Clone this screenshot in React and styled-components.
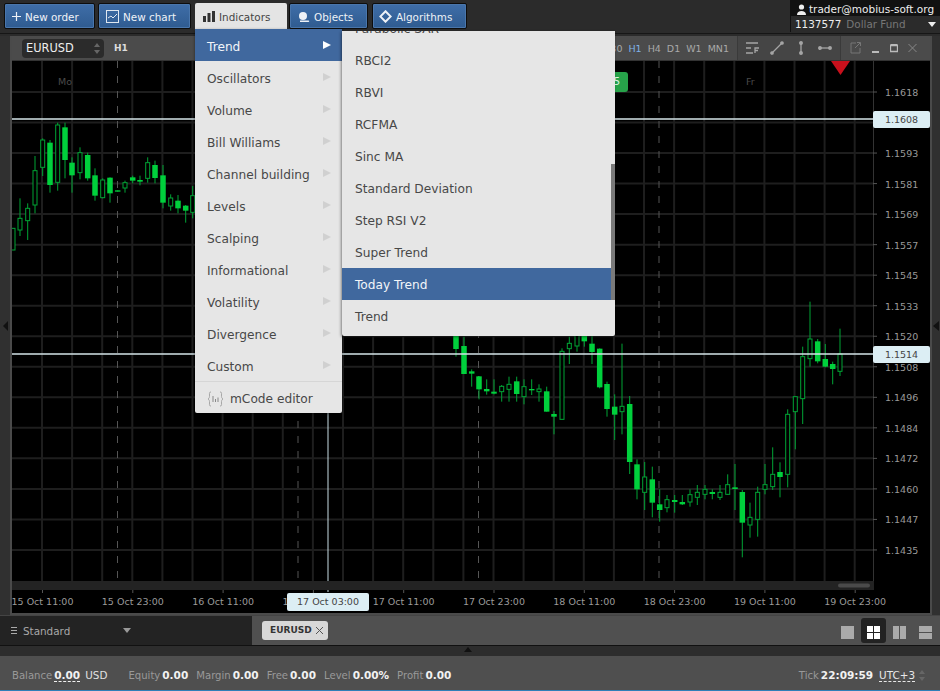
import React from 'react';
import styled, { createGlobalStyle } from 'styled-components';

const Global = createGlobalStyle`
    html, body { margin: 0; padding: 0; background: #2b2b2b; overflow: hidden; }
    * { box-sizing: border-box; }
`;

const FONT = `"DejaVu Sans", Verdana, sans-serif`;

const Page = styled.div`
    width: 940px;
    height: 691px;
    display: flex;
    flex-direction: column;
    font-family: ${FONT};
    background: #2b2b2b;
    border-bottom: 1px solid #2f7fb8;
`, TopBar = styled.div`
    height: 34px;
    flex: none;
    display: flex;
    align-items: flex-start;
    padding: 3px 0 0 4px;
    background: #2b2b2b;
    border-bottom: 1px solid #161616;
`, NavBtn = styled.div`
    height: 26px;
    width: ${p => p.$w}px;
    margin-right: ${p => p.$gap}px;
    display: flex;
    align-items: center;
    gap: 4px;
    padding: 1px 0 0 ${p => p.$pad || 7}px;
    font-size: 10.4px;
    color: #eef2f7;
    background: linear-gradient(#3f6ea8, #2f5b90);
    border: 1px solid #0d0d0d;
    border-radius: 2px;
    box-shadow: inset 0 0 0 1px #4a76ab;
    svg { flex: none; }
`, IndicatorsWrap = styled.div`
    position: relative;
    width: 92px;
    height: 27px;
    margin-right: 2px;
`, IndicatorsBtn = styled.div`
    height: 27px;
    display: flex;
    align-items: center;
    gap: 4px;
    padding-left: 8px;
    font-size: 10.4px;
    color: #444;
    background: #e4e4e4;
    border-radius: 2px 2px 0 0;
`, Account = styled.div`
    margin: -3px 0 0 auto;
    width: 150px;
    height: 32px;
    background: #2b2b2b;
    border-left: 1px solid #111;
    display: flex;
    flex-direction: column;
`, AccountTop = styled.div`
    height: 16px;
    background: #111;
    color: #eee;
    font-size: 10.5px;
    display: flex;
    align-items: center;
    gap: 2px;
    padding: 2px 0 0 5px;
    white-space: nowrap;
`, AccountBottom = styled.div`
    flex: 1;
    display: flex;
    align-items: center;
    padding: 0 4px;
    font-size: 10.4px;
    color: #777;
    b { color: #eee; font-weight: normal; margin-right: 5px; }
    i { margin-left: auto; width: 0; height: 0; border: 4px solid transparent; border-top: 5px solid #eee; border-bottom: 0; }
`, Main = styled.div`
    flex: 1;
    display: flex;
    min-height: 0;
    padding-top: 2px;
`, Rail = styled.div`
    width: ${p => p.$w}px;
    flex: none;
    background: #303030;
    display: flex;
    align-items: center;
    justify-content: center;
    border-${p => p.$side}: 2px solid #4a4a4a;
    i {
        width: 0; height: 0;
        border: 5px solid transparent;
        ${p => p.$side === 'right'
            ? 'border-right: 5px solid #111; border-left: 0;'
            : 'border-left: 0; border-right: 6px solid #111;'}
    }
`, ChartWindow = styled.div`
    position: relative;
    flex: 1;
    display: flex;
    flex-direction: column;
    min-width: 0;
`, ChartHeader = styled.div`
    height: 25px;
    flex: none;
    display: flex;
    align-items: center;
    padding-left: 10px;
    background: #4b4b4b;
    border-bottom: 1px solid #333;
`, SymbolSelect = styled.div`
    width: 82px;
    height: 19px;
    border-radius: 4px;
    background: #2b2b2b;
    color: #eee;
    font-size: 11.4px;
    display: flex;
    align-items: center;
    justify-content: space-between;
    padding: 0 4px;
    margin-right: 10px;
`, Frames = styled.div`
    flex: 1;
    display: flex;
    gap: 6px;
    justify-content: flex-end;
    padding-right: 8px;
    font-size: 9.5px;
    color: #a9a9a9;
`, ActiveFrame = styled.span`
    color: #7fb2e8;
`, FirstFrame = styled.span`
    color: #ddd;
    font-weight: bold;
    font-size: 9px;
    margin-right: auto;
`, ToolGroup = styled.div`
    height: 100%;
    flex: none;
    display: flex;
    align-items: center;
    gap: ${p => p.$gap}px;
    padding: ${p => p.$pad};
    border-left: 1px solid #3a3a3a;
    background: ${p => p.$bg || 'transparent'};
`, Chart = styled.svg`
    display: block;
    flex: 1;
    width: 918px;
    height: 554px;
    background: #000;
    font-family: ${FONT};
`, PriceTag = styled.div`
    position: absolute;
    left: 861px;
    top: ${p => p.$top}px;
    width: 57px;
    height: 17px;
    background: #dceef4;
    border-radius: 2px;
    color: #444;
    font-size: 9.5px;
    line-height: 18px;
    text-align: center;
`, TimeTag = styled.div`
    position: absolute;
    left: 275px;
    top: 557px;
    width: 82px;
    height: 18px;
    background: #dceef4;
    border-radius: 2px;
    color: #444;
    font-size: 9.5px;
    line-height: 18px;
    text-align: center;
`, SignalTag = styled.div`
    position: absolute;
    left: 590px;
    top: 36px;
    width: 26px;
    height: 20px;
    background: #27a34a;
    border-radius: 3px;
    color: #dff5e5;
    font-size: 10px;
    line-height: 20px;
    text-align: right;
    padding-right: 8px;
`, Menu = styled.div`
    position: absolute;
    left: 0;
    top: 26px;
    width: 147px;
    background: #e6e6e6;
    border-radius: 0 0 2px 2px;
    box-shadow: 0 1px 3px rgba(0,0,0,.5);
    z-index: 20;
`, MenuItem = styled.div`
    height: 32px;
    display: flex;
    align-items: center;
    justify-content: space-between;
    padding: 3px 11px 0 12px;
    font-size: 12.2px;
    color: ${p => p.$active ? '#f2f5f9' : '#484848'};
    background: ${p => p.$active ? '#40689e' : 'transparent'};
    i {
        margin-top: -4px;
        width: 0; height: 0;
        border: 4.5px solid transparent;
        border-right: 0;
        border-left: 8px solid ${p => p.$active ? '#fff' : '#d0d0d0'};
    }
`, EditorItem = styled.div`
    height: 32px;
    display: flex;
    align-items: center;
    gap: 6px;
    padding: 2px 0 0 12px;
    font-size: 12.2px;
    color: #484848;
    border-top: 1px solid #d6d6d6;
`, SubMenu = styled.div`
    position: absolute;
    left: 147px;
    top: 2px;
    width: 273px;
    height: 305px;
    overflow: hidden;
    background: #e6e6e6;
    border-radius: 0 0 2px 2px;
    box-shadow: -1px 1px 3px rgba(0,0,0,.45);
    z-index: 21;
`, SubList = styled.div`
    margin-top: -19px;
    ${MenuItem} { padding: 2px 11px 0 13px; }
`, ScrollThumb = styled.div`
    position: absolute;
    right: 0;
    top: 133px;
    width: 4px;
    height: 136px;
    background: #7a7a7a;
`, TabsBar = styled.div`
    height: 30px;
    flex: none;
    display: flex;
    border-top: 1px solid #444;
`, Workspace = styled.div`
    width: 252px;
    display: flex;
    align-items: center;
    padding-left: 11px;
    background: #232323;
    color: #a8a8a8;
    font-size: 10.4px;
    i {
        margin-left: 53px;
        width: 0; height: 0;
        border: 4px solid transparent;
        border-top: 5px solid #999;
        border-bottom: 0;
    }
`, Burger = styled.span`
    width: 6px;
    height: 7px;
    margin-right: 6px;
    border-top: 1px solid #aaa;
    border-bottom: 1px solid #aaa;
    background: linear-gradient(#aaa, #aaa) center / 100% 1px no-repeat;
`, TabStrip = styled.div`
    flex: 1;
    display: flex;
    align-items: center;
    padding: 0 2px 0 10px;
    background: #505050;
`, Tab = styled.div`
    width: 66px;
    height: 19px;
    display: flex;
    align-items: center;
    justify-content: space-between;
    padding: 0 4px 0 8px;
    margin-top: -1px;
    background: #d8d8d8;
    border-radius: 3px;
    color: #333;
    font-size: 9px;
    font-weight: bold;
`, Layouts = styled.div`
    margin-left: auto;
    display: flex;
    align-items: center;
`, LayoutBtn = styled.div`
    width: 25px;
    height: 25px;
    margin-left: ${p => p.$ml}px;
    padding-top: 3px;
    display: flex;
    align-items: center;
    justify-content: center;
    border-radius: 3px;
    background: ${p => p.$active ? '#222' : 'transparent'};
`, Splitter = styled.div`
    height: 11px;
    flex: none;
    display: flex;
    justify-content: center;
    padding-right: 4px;
    background: #2d2d2d;
    border-top: 1px solid #111;
    i {
        margin-top: 1px;
        width: 0; height: 0;
        border: 4px solid transparent;
        border-bottom: 5px solid #111;
        border-top: 0;
    }
`, StatusBar = styled.div`
    height: 34px;
    flex: none;
    display: flex;
    align-items: center;
    padding: 4px 0 0 12px;
    background: #4f4f4f;
    font-size: 10.1px;
    color: #999;
    white-space: nowrap;
`, Stat = styled.span`
    margin-right: ${p => p.$mr}px;
    b { color: #f2f2f2; margin-left: 2px; font-size: 10.5px; }
`, Dashed = styled.b`
    border-bottom: 1px dashed #f2f2f2;
`, Currency = styled.span`
    color: #e0e0e0;
    font-size: 10.4px;
    margin-right: 21px;
    margin-left: 5px;
`, Zone = styled.span`
    color: #e8e8e8;
    font-size: 10.4px;
    margin: 0 4px 0 6px;
    border-bottom: 1px dashed #e8e8e8;
`, Clock = styled.span`
    margin-left: auto;
    padding-right: 15px;
    display: flex;
    align-items: center;
    b { color: #f2f2f2; margin-left: 2px; font-size: 10.5px; }
`;

// [x, wick top, body top, body bottom, wick bottom, filled], y as read off 3x crops
const toCandles = (rows, oy) => rows.map(([x, a, b, c, d, f]) => [x, oy + a / 3, oy + b / 3, oy + c / 3, oy + d / 3, f]);

const candles = [
    ...toCandles([
        [13, 355, 355, 420, 420, 0], [20, 265, 325, 360, 378, 0], [27.7, 280, 295, 332, 390, 0], [35, 138, 182, 285, 310, 0],
        [42.7, 85, 90, 172, 198, 0], [50, 90, 98, 225, 248, 1], [57.7, 38, 45, 217, 242, 0], [65, 38, 52, 150, 205, 1],
        [72, 142, 158, 196, 248, 1], [80, 112, 128, 188, 208, 0], [87.7, 128, 135, 205, 212, 1], [95, 175, 196, 257, 272, 1],
        [102.7, 205, 210, 263, 265, 0], [110, 202, 203, 250, 278, 1], [117.7, 241, 241, 245, 245, 1], [125, 212, 218, 234, 248, 0],
        [132.7, 197, 202, 212, 220, 1], [140, 197, 210, 215, 226, 1], [147.7, 142, 158, 205, 218, 0], [155, 152, 165, 204, 220, 1],
        [163, 165, 196, 278, 295, 1], [170.7, 253, 264, 288, 302, 0], [178, 255, 272, 295, 310, 1], [185.7, 285, 287, 302, 338, 1],
        [192.7, 228, 257, 307, 325, 0],
    ], 110),
    ...toCandles([
        [456, -30, -20, 57, 80, 1], [464, 20, 48, 132, 132, 1], [471.7, 118, 124, 131, 170, 1], [479, 138, 139, 178, 208, 1],
        [486.7, 148, 177, 184, 194, 1], [494, 148, 185, 191, 193, 1], [501.7, 165, 169, 185, 215, 0], [509, 140, 163, 178, 215, 0],
        [516.7, 140, 154, 192, 215, 1], [524, 148, 170, 200, 223, 0], [531.7, 148, 177, 181, 195, 1], [539, 163, 177, 185, 215, 0],
        [546.7, 170, 184, 245, 245, 1], [554, 243, 252, 260, 313, 1], [562, 55, 64, 268, 268, 0], [569.3, 20, 40, 56, 102, 0],
        [577, 0, 10, 48, 65, 0], [584.3, 0, 10, 34, 50, 1], [592, 15, 41, 66, 102, 1], [599.7, 55, 56, 172, 175, 1],
        [607, 155, 162, 237, 260, 1], [614.7, 193, 230, 254, 330, 1], [622, 41, 229, 245, 313, 0], [629.7, 198, 222, 396, 432, 1],
        [637, 388, 403, 478, 508, 1], [644.7, 396, 441, 487, 540, 0], [652.3, 410, 448, 518, 562, 1], [659.7, 478, 523, 540, 575, 1],
        [667, 495, 509, 533, 547, 0], [674.7, 495, 510, 516, 548, 1], [682.3, 495, 516, 523, 525, 1], [690, 478, 494, 516, 530, 0],
    ], 330),
    ...toCandles([
        [697.3, 585, 607, 622, 645, 0], [705, 585, 598, 613, 628, 0], [712.3, 598, 606, 612, 628, 1], [720, 585, 607, 622, 630, 0],
        [727.7, 553, 584, 613, 615, 0], [735, 522, 592, 597, 660, 1], [742.3, 600, 606, 698, 802, 1], [750, 638, 682, 705, 743, 0],
        [757.7, 590, 607, 688, 740, 0], [765, 522, 584, 598, 613, 0], [772.7, 472, 553, 590, 600, 0], [780, 517, 546, 561, 622, 1],
        [787.7, 358, 373, 553, 592, 0], [795.3, 320, 320, 365, 478, 0], [802.7, 170, 200, 326, 402, 0], [810, 35, 147, 206, 230, 0],
        [817.7, 147, 154, 214, 220, 1], [825.3, 162, 207, 230, 232, 1], [832.7, 215, 222, 237, 283, 1], [840, 116, 192, 244, 258, 0],
    ], 290),
];

// 1.1606 sits under the 1.1608 crosshair tag, so only its grid line shows
const prices = ['1.1618', '', '1.1593', '1.1581', '1.1569', '1.1557', '1.1545', '1.1533', '1.1520', '1.1508', '1.1496', '1.1484', '1.1472', '1.1460', '1.1447', '1.1435'];
const times = ['15 Oct 11:00', '15 Oct 23:00', '16 Oct 11:00', '16 Oct 23:00', '17 Oct 11:00', '17 Oct 23:00', '18 Oct 11:00', '18 Oct 23:00', '19 Oct 11:00', '19 Oct 23:00'];
const vLines = Array.from({ length: 28 }, (_, i) => 42 + i * 30.1);
const dashes = [117.5, 298, 478.5, 659];

const ChartDrawing = () => (
    <Chart viewBox="12 61 918 554">
        {prices.map((_, i) => <line key={i} x1="12" x2="873" y1={92 + i * 30.53} y2={92 + i * 30.53} stroke="#1e1e1e" strokeWidth="2" />)}
        {vLines.map(x => <line key={x} x1={x} x2={x} y1="61" y2="581" stroke="#1e1e1e" strokeWidth="2" />)}
        {dashes.map(x => <line key={x} x1={x} x2={x} y1="61" y2="581" stroke="#555" strokeWidth="1" strokeDasharray="7 8" />)}
        <text x="58" y="85" fontSize="9.5" fill="#4a4a4a">Mo</text>
        <text x="746" y="85" fontSize="9.5" fill="#4a4a4a">Fr</text>
        {candles.map(([x, a, b, c, d, f]) => (
            <g key={x}>
                <line x1={x} x2={x} y1={a} y2={d} stroke="#00a435" strokeWidth="1" />
                <rect x={f ? x - 2.75 : x - 2} y={b} width={f ? 5.5 : 4} height={Math.max(c - b, 1)}
                    fill={f ? '#00d03c' : '#000'} stroke={f ? 'none' : '#00a435'} strokeWidth="1" />
            </g>
        ))}
        <line x1="12" x2="873" y1="119" y2="119" stroke="#d5e4e8" strokeWidth="1.5" />
        <line x1="12" x2="873" y1="354" y2="354" stroke="#d5e4e8" strokeWidth="1.5" />
        <line x1="328" x2="328" y1="61" y2="592" stroke="#c8dde4" strokeWidth="1" />
        <polygon points="831,61 850,61 840.5,75" fill="#c8101c" />
        <rect x="873" y="61" width="1" height="520" fill="#333" />
        <rect x="12" y="581" width="862" height="9" fill="#232323" />
        <rect x="838" y="583.5" width="32" height="4" rx="2" fill="#4a4a4a" />
        {prices.map((p, i) => (
            <g key={i}>
                <line x1="873" x2="877" y1={92 + i * 30.53} y2={92 + i * 30.53} stroke="#555" />
                {p && <text x="885" y={96 + i * 30.53} fontSize="9.5" fill="#9a9a9a">{p}</text>}
            </g>
        ))}
        {times.map((t, i) => (
            <g key={t}>
                <line x1={42.5 + i * 90.3} x2={42.5 + i * 90.3} y1="590" y2="593" stroke="#555" />
                <text x={42.5 + i * 90.3} y="604.5" fontSize="9.5" fill="#9a9a9a" textAnchor="middle">{t}</text>
            </g>
        ))}
        <rect x="12" y="613" width="918" height="2" fill="#4a4a4a" />
    </Chart>
);

const NewChartIcon = () => (
    <svg width="13" height="13" viewBox="0 0 13 13" fill="none" stroke="#dfe7f0">
        <rect x=".5" y=".5" width="12" height="12" strokeWidth="1" />
        <path d="M2 8l3-2 2 2 4-4" />
    </svg>
);
const BarsIcon = () => (
    <svg width="12" height="11" viewBox="0 0 12 11" fill="#333">
        <rect x="0" y="5" width="3" height="6" /><rect x="4.5" y="2" width="3" height="9" /><rect x="9" y="0" width="3" height="11" />
    </svg>
);
const ObjectsIcon = () => (
    <svg width="12" height="12" viewBox="0 0 12 12" fill="#eef2f7">
        <circle cx="5" cy="5" r="4" />
        <path d="M2 9.5h8.5c.8 0 1 1.5 0 1.5H2z" />
    </svg>
);
const DiamondIcon = () => (
    <svg width="13" height="13" viewBox="0 0 13 13" fill="none" stroke="#eef2f7" strokeWidth="2">
        <path d="M6.5 1.3l5.2 5.2-5.2 5.2-5.2-5.2z" />
    </svg>
);
const UserIcon = () => (
    <svg width="11" height="11" viewBox="0 0 11 11" fill="#eee">
        <circle cx="5.5" cy="3" r="2.6" />
        <path d="M1 11c0-3 2-4 4.5-4s4.5 1 4.5 4z" />
    </svg>
);
const SpinIcon = () => (
    <svg width="6" height="11" viewBox="0 0 6 11" fill="#666">
        <path d="M3 0l3 4H0zM3 11L0 7h6z" />
    </svg>
);
const Tool = ({ children, w = 14, h = 14 }) => (
    <svg width={w} height={h} viewBox={`0 0 ${w} ${h}`} fill="none" stroke="#a5a5a5" strokeWidth="1.3">{children}</svg>
);
const EditorIcon = () => (
    <svg width="17" height="16" viewBox="0 0 17 16" fill="none" stroke="#a8a8a8">
        <path d="M4 1C2 1 2.500 2 2.500 4s.2 3-1.500 4c1.700 1 1.500 2 1.500 4s-.5 3 1.500 3M13 1c2 0 1.500 1 1.500 3s-.2 3 1.500 4c-1.700 1-1.500 2-1.500 4s.5 3-1.500 3" />
        <path d="M6 5v6M8.500 8v3M11 6.500V11" stroke="#888" />
    </svg>
);
const Squares = ({ kind }) => {
    const c = kind === 'grid' ? '#fff' : '#aaa';
    const rects = { one: [[0, 0, 13, 13]], grid: [[0, 0, 6, 6], [7, 0, 6, 6], [0, 7, 6, 6], [7, 7, 6, 6]], cols: [[0, 0, 6, 13], [7, 0, 6, 13]], rows: [[0, 0, 13, 6], [0, 7, 13, 6]] }[kind];
    return <svg width="13" height="13" viewBox="0 0 13 13" fill={c}>{rects.map((r, i) => <rect key={i} x={r[0]} y={r[1]} width={r[2]} height={r[3]} />)}</svg>;
};

const mainMenu = ['Oscillators', 'Volume', 'Bill Williams', 'Channel building', 'Levels', 'Scalping', 'Informational', 'Volatility', 'Divergence', 'Custom'];
const trendMenu = ['Parabolic SAR', 'RBCI2', 'RBVI', 'RCFMA', 'Sinc MA', 'Standard Deviation', 'Step RSI V2', 'Super Trend', 'Today Trend', 'Trend'];
const frames = ['M1', 'M5', 'M15', 'M30', 'H1', 'H4', 'D1', 'W1', 'MN1'];

export default function App() {
    return (
        <Page>
            <Global />
            <TopBar>
                <NavBtn $w={91} $gap={3} $pad={7}>
                    <svg width="9" height="9" viewBox="0 0 9 9" stroke="#eef2f7" strokeWidth="1.2"><path d="M4.500 0v9M0 4.500h9" /></svg>
                    New order
                </NavBtn>
                <NavBtn $w={93} $gap={4}><NewChartIcon />New chart</NavBtn>
                <IndicatorsWrap>
                    <IndicatorsBtn><BarsIcon />Indicators</IndicatorsBtn>
                    <Menu>
                        <MenuItem $active>Trend<i /></MenuItem>
                        {mainMenu.map(m => <MenuItem key={m}>{m}<i /></MenuItem>)}
                        <EditorItem><EditorIcon />mCode editor</EditorItem>
                        <SubMenu>
                            <SubList>
                                {trendMenu.map(m => <MenuItem key={m} $active={m === 'Today Trend'}>{m}</MenuItem>)}
                            </SubList>
                            <ScrollThumb />
                        </SubMenu>
                    </Menu>
                </IndicatorsWrap>
                <NavBtn $w={79} $gap={4} $pad={8}><ObjectsIcon />Objects</NavBtn>
                <NavBtn $w={95} $gap={0} $pad={6}><DiamondIcon />Algorithms</NavBtn>
                <Account>
                    <AccountTop><UserIcon />trader@mobius-soft.org</AccountTop>
                    <AccountBottom><b>1137577</b>Dollar Fund<i /></AccountBottom>
                </Account>
            </TopBar>
            <Main>
                <Rail $w={12} $side="right"><i /></Rail>
                <ChartWindow>
                    <ChartHeader>
                        <SymbolSelect>EURUSD<SpinIcon /></SymbolSelect>
                        <Frames>
                            <FirstFrame>H1</FirstFrame>
                            {frames.map(f => f === 'H1' ? <ActiveFrame key={f}>{f}</ActiveFrame> : <span key={f}>{f}</span>)}
                        </Frames>
                        <ToolGroup $gap={11} $pad="0 8px" $bg="#454545">
                            <Tool w={13}><path d="M0 2h12M5 7H0M0 12h7" /><path d="M9 12V7h4M9 9.500h3" /></Tool>
                            <Tool><path d="M2 12L12 2" /><circle cx="2" cy="12" r="1.200" fill="#a5a5a5" /><circle cx="12" cy="2" r="1.200" fill="#a5a5a5" /></Tool>
                            <Tool w={12}><path d="M6 2v10" /><circle cx="6" cy="2" r="1.300" fill="#a5a5a5" /><circle cx="6" cy="12" r="1.300" fill="#a5a5a5" /></Tool>
                            <Tool><path d="M1 7h12" /><circle cx="2" cy="7" r="1.300" fill="#a5a5a5" /><circle cx="12" cy="7" r="1.300" fill="#a5a5a5" /></Tool>
                        </ToolGroup>
                        <ToolGroup $gap={10} $pad="0 13px 0 9px">
                            <Tool w={11}><path d="M6 2H1v10h9V7M5 7l5-5M7 1.500h3.500V5" stroke="#777" strokeWidth="1" /></Tool>
                            <Tool w={9}><path d="M1 11h7" strokeWidth="2" stroke="#bbb" /></Tool>
                            <Tool w={8}><path d="M.5 4.500h7v6h-7z" stroke="#bbb" /><path d="M.5 4h7" stroke="#bbb" strokeWidth="2" /></Tool>
                            <Tool w={9}><path d="M.5 3l8 8M8.500 3l-8 8" stroke="#888" strokeWidth="1" /></Tool>
                        </ToolGroup>
                    </ChartHeader>
                    <ChartDrawing />
                    <SignalTag>5</SignalTag>
                    <PriceTag $top={75}>1.1608</PriceTag>
                    <PriceTag $top={310}>1.1514</PriceTag>
                    <TimeTag>17 Oct 03:00</TimeTag>
                </ChartWindow>
                <Rail $w={10} $side="left"><i /></Rail>
            </Main>
            <TabsBar>
                <Workspace><Burger />Standard<i /></Workspace>
                <TabStrip>
                    <Tab>EURUSD
                        <svg width="9" height="9" viewBox="0 0 9 9" stroke="#555"><path d="M1 1l7 7M8 1L1 8" /></svg>
                    </Tab>
                    <Layouts>
                        <LayoutBtn><Squares kind="one" /></LayoutBtn>
                        <LayoutBtn $ml={1} $active><Squares kind="grid" /></LayoutBtn>
                        <LayoutBtn $ml={1}><Squares kind="cols" /></LayoutBtn>
                        <LayoutBtn $ml={1}><Squares kind="rows" /></LayoutBtn>
                    </Layouts>
                </TabStrip>
            </TabsBar>
            <Splitter><i /></Splitter>
            <StatusBar>
                <Stat $mr={0}>Balance<Dashed>0.00</Dashed></Stat>
                <Currency>USD</Currency>
                <Stat $mr={8}>Equity<b>0.00</b></Stat>
                <Stat $mr={8}>Margin<b>0.00</b></Stat>
                <Stat $mr={8}>Free<b>0.00</b></Stat>
                <Stat $mr={8}>Level<b>0.00%</b></Stat>
                <Stat $mr={0}>Profit<b>0.00</b></Stat>
                <Clock>Tick<b>22:09:59</b><Zone>UTC+3</Zone><SpinIcon /></Clock>
            </StatusBar>
        </Page>
    );
}
